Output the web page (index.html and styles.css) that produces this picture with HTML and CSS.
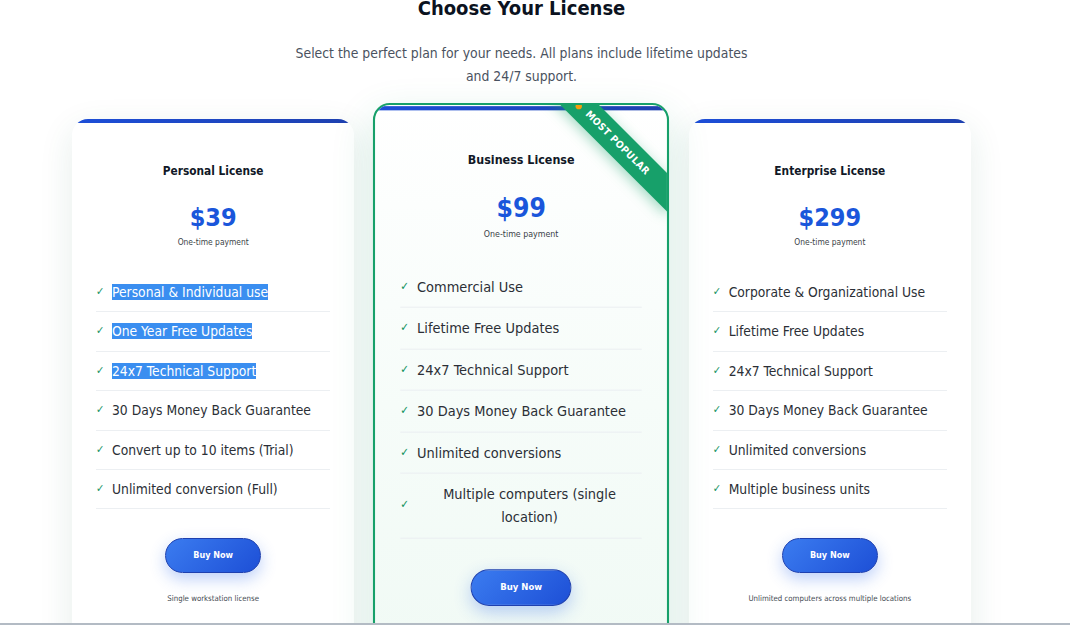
FILE: index.html
```html
<!DOCTYPE html>
<html lang="en">
<head>
<meta charset="utf-8">
<title>Choose Your License</title>
<link rel="stylesheet" href="styles.css">
</head>
<body>
<main class="pricing">
  <header class="pricing-header">
    <h1 class="pricing-title">Choose Your License</h1>
    <p class="pricing-subtitle">Select the perfect plan for your needs. All plans include lifetime updates and 24/7 support.</p>
  </header>
  <div class="plans">
    <article class="plan">
      <h2 class="plan-name">Personal License</h2>
      <div class="plan-price">$39</div>
      <div class="plan-term">One-time payment</div>
      <ul class="features">
        <li class="feature"><span class="check">✓</span><span class="feature-text"><span class="selected">Personal &amp; Individual use</span></span></li>
        <li class="feature"><span class="check">✓</span><span class="feature-text"><span class="selected">One Year Free Updates</span></span></li>
        <li class="feature"><span class="check">✓</span><span class="feature-text"><span class="selected">24x7 Technical Support</span></span></li>
        <li class="feature"><span class="check">✓</span><span class="feature-text">30 Days Money Back Guarantee</span></li>
        <li class="feature"><span class="check">✓</span><span class="feature-text">Convert up to 10 items (Trial)</span></li>
        <li class="feature"><span class="check">✓</span><span class="feature-text">Unlimited conversion (Full)</span></li>
      </ul>
      <a class="buy" href="#">Buy Now</a>
      <p class="plan-note">Single workstation license</p>
    </article>

    <article class="plan plan--popular">
      <span class="ribbon-dot"></span>
      <div class="ribbon">MOST POPULAR</div>
      <h2 class="plan-name">Business License</h2>
      <div class="plan-price">$99</div>
      <div class="plan-term">One-time payment</div>
      <ul class="features">
        <li class="feature"><span class="check">✓</span><span class="feature-text">Commercial Use</span></li>
        <li class="feature"><span class="check">✓</span><span class="feature-text">Lifetime Free Updates</span></li>
        <li class="feature"><span class="check">✓</span><span class="feature-text">24x7 Technical Support</span></li>
        <li class="feature"><span class="check">✓</span><span class="feature-text">30 Days Money Back Guarantee</span></li>
        <li class="feature"><span class="check">✓</span><span class="feature-text">Unlimited conversions</span></li>
        <li class="feature"><span class="check">✓</span><span class="feature-text">Multiple computers (single location)</span></li>
      </ul>
      <a class="buy" href="#">Buy Now</a>
      <p class="plan-note">Multiple workstations in one location</p>
    </article>

    <article class="plan">
      <h2 class="plan-name">Enterprise License</h2>
      <div class="plan-price">$299</div>
      <div class="plan-term">One-time payment</div>
      <ul class="features">
        <li class="feature"><span class="check">✓</span><span class="feature-text">Corporate &amp; Organizational Use</span></li>
        <li class="feature"><span class="check">✓</span><span class="feature-text">Lifetime Free Updates</span></li>
        <li class="feature"><span class="check">✓</span><span class="feature-text">24x7 Technical Support</span></li>
        <li class="feature"><span class="check">✓</span><span class="feature-text">30 Days Money Back Guarantee</span></li>
        <li class="feature"><span class="check">✓</span><span class="feature-text">Unlimited conversions</span></li>
        <li class="feature"><span class="check">✓</span><span class="feature-text">Multiple business units</span></li>
      </ul>
      <a class="buy" href="#">Buy Now</a>
      <p class="plan-note">Unlimited computers across multiple locations</p>
    </article>
  </div>
</main>
<div class="window-edge"></div>
</body>
</html>
```

FILE: styles.css
```css
html, body {
  margin: 0;
  padding: 0;
  overflow: hidden;
  background: #ffffff;
}

body {
  font-family: "DejaVu Sans Condensed", "DejaVu Sans", sans-serif;
  color: #2b2f36;
}

.pricing {
  width: 899px;
  margin-left: 72px;
}

.pricing-header {
  text-align: center;
  margin-bottom: 32px;
}

.pricing-title {
  margin: -4px 0 22px;
  font-size: 20px;
  line-height: 24px;
  font-weight: 700;
  color: #0b1220;
}

.pricing-subtitle {
  max-width: 470px;
  margin: 0 auto;
  font-size: 13.85px;
  line-height: 22.5px;
  color: #4a5260;
}

.plans {
  display: grid;
  grid-template-columns: repeat(3, 1fr);
  gap: 26px;
  align-items: start;
}

.plan {
  position: relative;
  box-sizing: border-box;
  min-height: 640px;
  padding: 43px 24px 40px;
  background: #ffffff;
  border-radius: 16px;
  text-align: center;
  overflow: hidden;
  box-shadow: 0 10px 34px rgba(30, 100, 75, 0.11);
}

.plan::before {
  content: "";
  position: absolute;
  left: 0;
  right: 0;
  top: 0;
  height: 4px;
  background: linear-gradient(90deg, #1d4ed8, #1e40af);
}

.plan--popular {
  border: 2px solid #17a06a;
  background: linear-gradient(180deg, #ffffff 0%, #f6fcf9 45%, #eef9f3 100%);
  transform: scale(1.05);
  z-index: 1;
  box-shadow: 0 14px 40px rgba(20, 150, 100, 0.16);
}

.plan--popular::before {
  top: 1px;
}

.ribbon {
  position: absolute;
  top: 23px;
  right: -33px;
  width: 160px;
  height: 26px;
  line-height: 26px;
  background: #17a06a;
  color: #ffffff;
  font-size: 9.5px;
  font-weight: 700;
  letter-spacing: 0.5px;
  text-align: center;
  transform: rotate(45deg);
  box-shadow: 0 3px 12px rgba(23, 160, 106, 0.4);
}

.ribbon-dot {
  position: absolute;
  top: -2px;
  left: 191px;
  width: 6px;
  height: 6px;
  border-radius: 50%;
  background: #f59e0b;
  z-index: 2;
}

.plan-name {
  margin: 0 0 23px;
  font-size: 11.8px;
  line-height: 18px;
  font-weight: 700;
  color: #111827;
}

.plan-price {
  font-size: 25px;
  line-height: 30px;
  font-weight: 700;
  color: #1a56db;
}

.plan-term {
  margin-top: 3px;
  font-size: 8.4px;
  line-height: 12px;
  color: #3a3f47;
}

.features {
  list-style: none;
  margin: 25px 0 29px;
  padding: 0;
}

.feature {
  display: flex;
  align-items: center;
  padding: 8px 0;
  border-bottom: 1px solid #eceff2;
  font-size: 13.75px;
  line-height: 22.4px;
}

.check {
  flex: none;
  width: 16px;
  text-align: left;
  font-size: 11px;
  font-weight: 700;
  color: #14935e;
}

.selected {
  background: #3a8ef0;
  color: #ffffff;
}

.buy {
  display: inline-block;
  box-sizing: border-box;
  height: 35px;
  padding: 0 27px;
  line-height: 33px;
  border: 1px solid #1e40af;
  border-radius: 999px;
  background: linear-gradient(135deg, #3b7cf0, #1d4fd6);
  color: #ffffff;
  font-size: 9px;
  font-weight: 700;
  text-decoration: none;
  box-shadow: 0 6px 16px rgba(37, 99, 235, 0.3);
}

.plan-note {
  margin: 19.5px 0 0;
  font-size: 7.8px;
  line-height: 11px;
  color: #444a52;
}

.window-edge {
  position: fixed;
  left: 0;
  right: 0;
  bottom: 0;
  height: 2px;
  background: #b3bbc4;
  z-index: 5;
}
```
